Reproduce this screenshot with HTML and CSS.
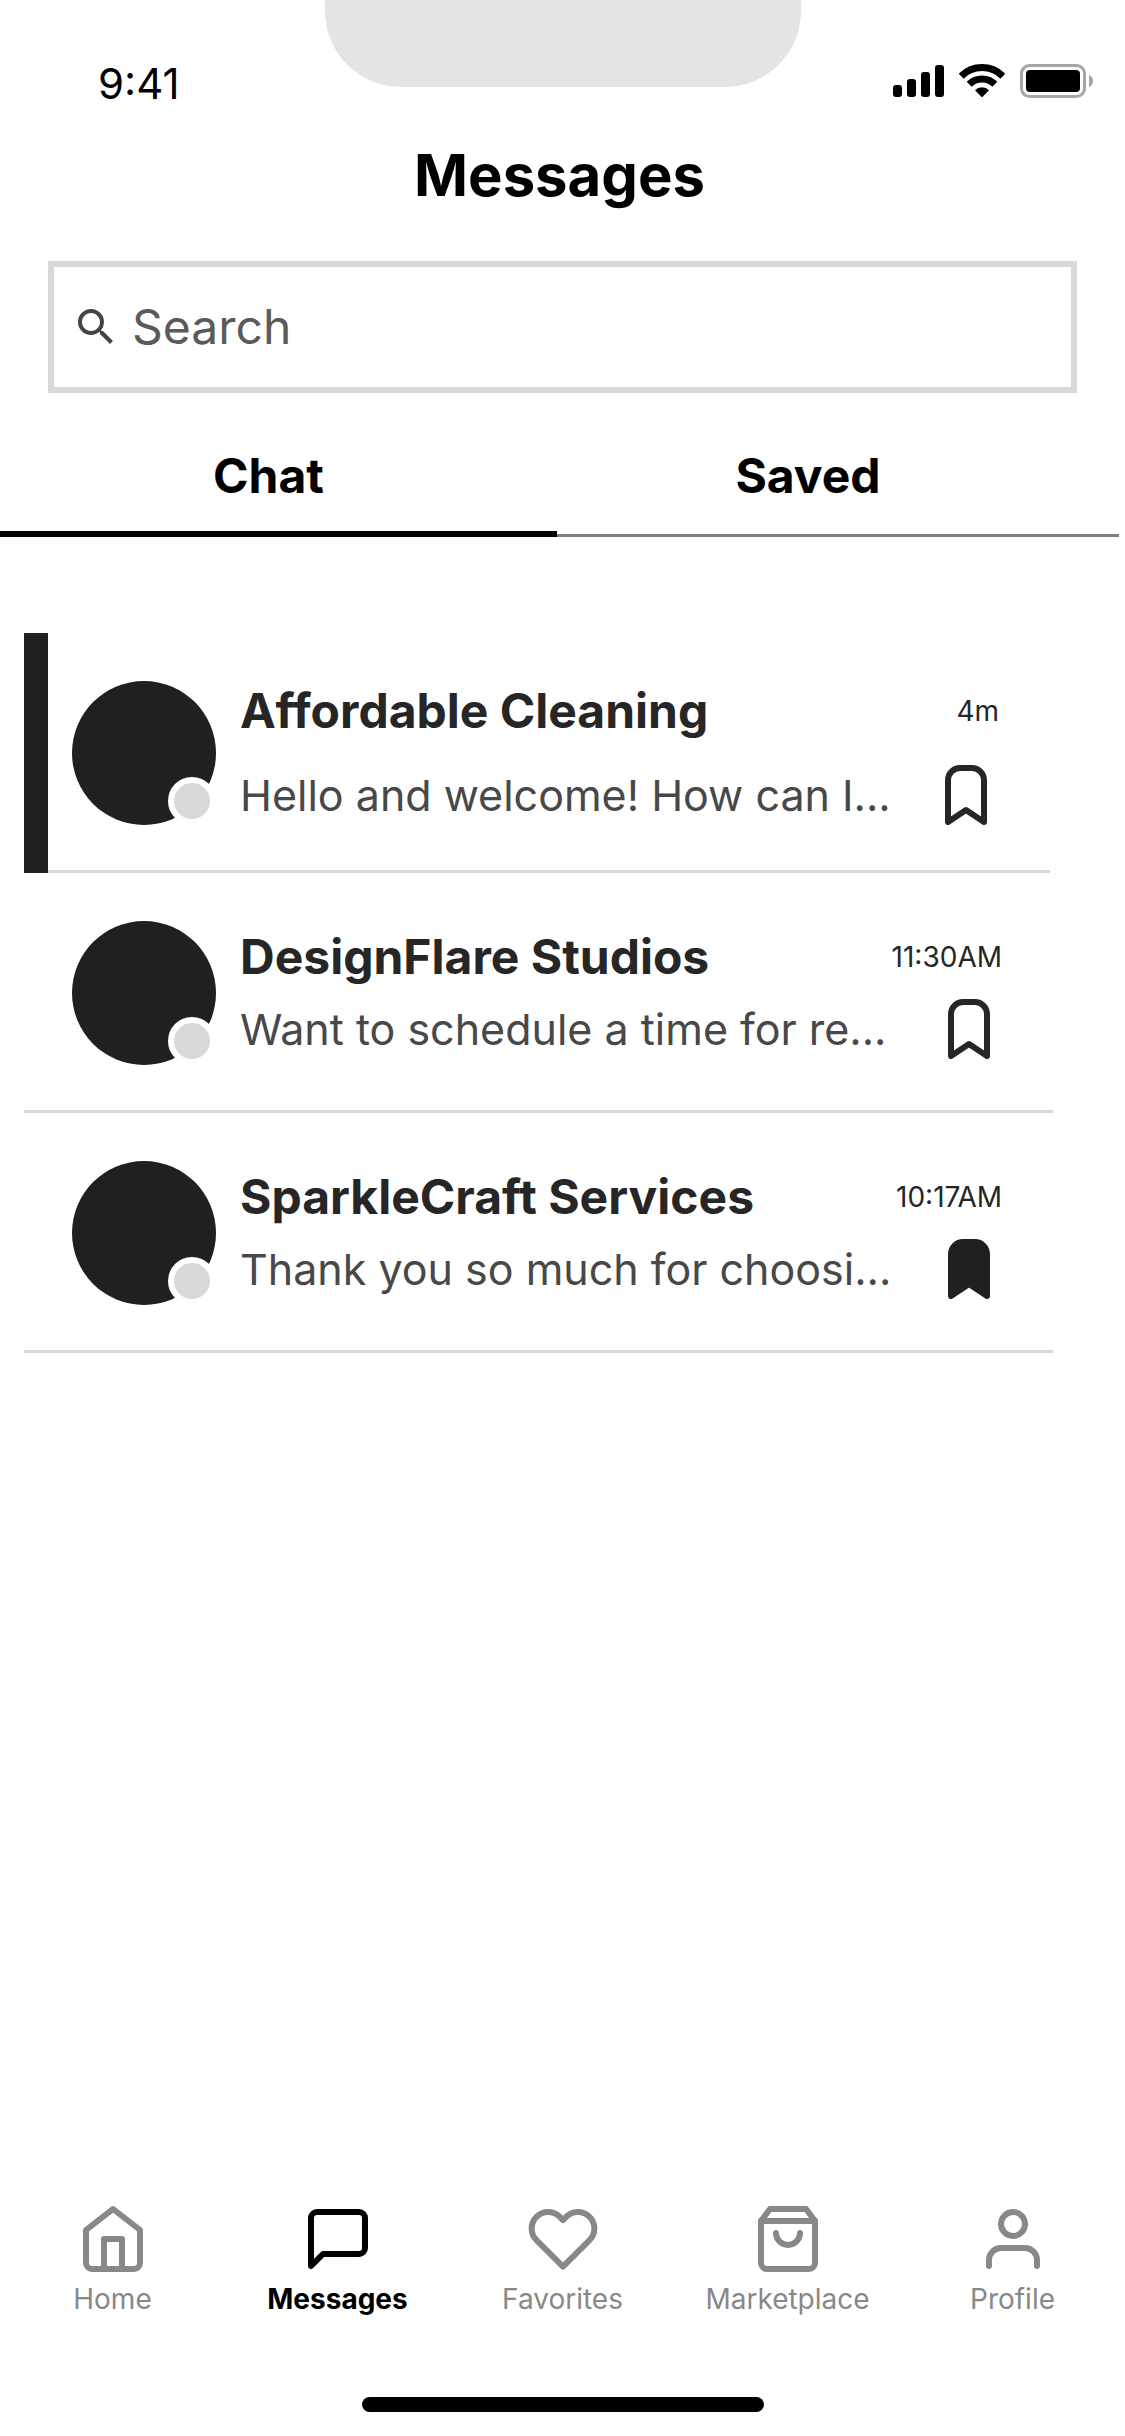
FILE: index.html
```html
<!DOCTYPE html>
<html lang="en">
<head>
<meta charset="utf-8">
<meta name="viewport" content="width=device-width, initial-scale=1">
<title>Messages</title>
<link rel="stylesheet" href="styles.css">
</head>
<body>
<div class="notch"></div>
<div class="status">
  <span class="status-time">9:41</span>
  <div class="status-icons">
    <svg width="51" height="34" viewBox="0 0 51 34" aria-hidden="true">
      <rect x="0" y="21" width="9" height="12" rx="3"/><rect x="14" y="15" width="9" height="18" rx="3"/><rect x="28" y="8" width="9" height="25" rx="3"/><rect x="42" y="1" width="9" height="32" rx="3"/>
    </svg>
    <svg width="46" height="34" viewBox="0 0 46 34" aria-hidden="true">
      <g fill="none" stroke="#000" stroke-width="7"><path d="M2.2 12.200a29.500 29.500 0 0 1 41.600 0"/><path d="M10.200 20.200a18.200 18.200 0 0 1 25.600 0"/></g>
      <path d="M16 26.200a10 10 0 0 1 14 0l-6.300 6.500a1 1 0 0 1-1.400 0z"/>
    </svg>
    <svg width="73" height="34" viewBox="0 0 73 34" aria-hidden="true">
      <rect x="1.500" y="1.500" width="63" height="31" rx="8" fill="none" stroke="#a6a6a6" stroke-width="3"/>
      <rect x="6" y="6" width="54" height="22" rx="4"/>
      <path d="M69 11v12a6.500 6.500 0 0 0 0-12z" fill="#a6a6a6"/>
    </svg>
  </div>
</div>
<header class="header"><h1 class="title">Messages</h1></header>
<main class="main">
  <label class="search">
    <svg class="search-icon" viewBox="0 0 24 24" aria-hidden="true"><path d="M15.500 14h-.79l-.28-.27A6.471 6.471 0 0 0 16 9.500 6.500 6.500 0 1 0 9.500 16c1.610 0 3.090-.59 4.230-1.570l.27.28v.79l5 4.990L20.490 19l-4.990-5zm-6 0C7.010 14 5 11.990 5 9.500S7.010 5 9.500 5 14 7.010 14 9.500 11.990 14 9.500 14z"/></svg>
    <input class="search-input" type="text" placeholder="Search" aria-label="Search">
  </label>
  <div class="tabs" role="tablist">
    <button class="tab tab-chat" type="button" role="tab" aria-selected="true">Chat</button>
    <button class="tab tab-saved" type="button" role="tab" aria-selected="false">Saved</button>
  </div>
  <ul class="chats">
    <li class="chat chat-unread">
      <div class="avatar"><span class="presence"></span></div>
      <div class="chat-body">
        <div class="chat-line"><h2 class="chat-name">Affordable Cleaning</h2><time class="chat-time">4m</time></div>
        <div class="chat-line"><p class="chat-text">Hello and welcome! How can I...</p>
          <button class="save" type="button" aria-label="Save chat"><svg class="save-icon" viewBox="0 0 14 20" aria-hidden="true"><path d="M13 19l-6-4-6 4V5a4 4 0 0 1 4-4h4a4 4 0 0 1 4 4z"/></svg></button></div>
      </div>
    </li>
    <li class="chat">
      <div class="avatar"><span class="presence"></span></div>
      <div class="chat-body">
        <div class="chat-line"><h2 class="chat-name">DesignFlare Studios</h2><time class="chat-time">11:30AM</time></div>
        <div class="chat-line"><p class="chat-text">Want to schedule a time for re...</p>
          <button class="save" type="button" aria-label="Save chat"><svg class="save-icon" viewBox="0 0 14 20" aria-hidden="true"><path d="M13 19l-6-4-6 4V5a4 4 0 0 1 4-4h4a4 4 0 0 1 4 4z"/></svg></button></div>
      </div>
    </li>
    <li class="chat">
      <div class="avatar"><span class="presence"></span></div>
      <div class="chat-body">
        <div class="chat-line"><h2 class="chat-name">SparkleCraft Services</h2><time class="chat-time">10:17AM</time></div>
        <div class="chat-line"><p class="chat-text">Thank you so much for choosi...</p>
          <button class="save save-on" type="button" aria-label="Remove from saved"><svg class="save-icon" viewBox="0 0 14 20" aria-hidden="true"><path d="M13 19l-6-4-6 4V5a4 4 0 0 1 4-4h4a4 4 0 0 1 4 4z"/></svg></button></div>
      </div>
    </li>
  </ul>
</main>
<nav class="nav">
  <a class="nav-item" href="#home"><svg class="nav-icon" viewBox="0 0 24 24" aria-hidden="true"><path d="M3 9l9-7 9 7v11a2 2 0 0 1-2 2H5a2 2 0 0 1-2-2z"/><path d="M9 22V12h6v10"/></svg>Home</a>
  <a class="nav-item nav-current" href="#messages" aria-current="page"><svg class="nav-icon" viewBox="0 0 24 24" aria-hidden="true"><path d="M21 15a2 2 0 0 1-2 2H7l-4 4V5a2 2 0 0 1 2-2h14a2 2 0 0 1 2 2z"/></svg>Messages</a>
  <a class="nav-item" href="#favorites"><svg class="nav-icon" viewBox="0 0 24 24" aria-hidden="true"><path d="M20.840 4.610a5.500 5.500 0 0 0-7.780 0L12 5.670l-1.060-1.060a5.500 5.500 0 0 0-7.780 7.780l1.060 1.060L12 21.230l7.780-7.780 1.060-1.060a5.500 5.500 0 0 0 0-7.780z"/></svg>Favorites</a>
  <a class="nav-item" href="#marketplace"><svg class="nav-icon" viewBox="0 0 24 24" aria-hidden="true"><path d="M6 2L3 6v14a2 2 0 0 0 2 2h14a2 2 0 0 0 2-2V6l-3-4z"/><path d="M3 6h18"/><path d="M16 10a4 4 0 0 1-8 0"/></svg>Marketplace</a>
  <a class="nav-item" href="#profile"><svg class="nav-icon" viewBox="0 0 24 24" aria-hidden="true"><path d="M20 21v-2a4 4 0 0 0-4-4H8a4 4 0 0 0-4 4v2"/><circle cx="12" cy="7" r="4"/></svg>Profile</a>
</nav>
<div class="home-bar"></div>
</body>
</html>
```
FILE: styles.css
```css
* { box-sizing: border-box; }

body {
  margin: 0;
  min-height: 100vh;
  display: flex;
  flex-direction: column;
  background: #fff;
  color: #000;
  font-family: Inter, "Liberation Sans", sans-serif;
}

h1, h2, p, ul { margin: 0; padding: 0; }

button {
  padding: 0;
  border: 0;
  background: none;
  color: inherit;
  font-family: inherit;
}

/* Status bar */
.notch {
  position: absolute;
  top: 0;
  left: 0;
  right: 0;
  width: 476px;
  height: 87px;
  margin: 0 auto;
  border-radius: 0 0 76px 76px;
  background: #e4e4e4;
}

.status {
  display: flex;
  justify-content: space-between;
  padding: 57px 32px 0 98px;
}

.status-time {
  font-size: 42px;
  line-height: 54px;
}

.status-icons {
  display: flex;
  align-items: center;
  gap: 15px;
  height: 48px;
}

/* Header */
.header { padding: 28px 6px 50px 0; }

.title {
  font-size: 58px;
  line-height: 72px;
  font-weight: 700;
  text-align: center;
}

/* Search */
.search {
  display: flex;
  align-items: center;
  gap: 12px;
  height: 132px;
  margin: 0 48px;
  padding: 0 18px;
  border: 6px solid #d9d9d9;
}

.search-icon {
  width: 48px;
  height: 48px;
  fill: #444;
}

.search-input {
  flex: 1;
  min-width: 0;
  padding: 0;
  border: 0;
  outline: 0;
  background: none;
  color: #000;
  font-family: inherit;
  font-size: 48px;
  line-height: 60px;
}

.search-input::placeholder {
  color: #5a5a5a;
  opacity: 1;
}

/* Tabs */
.tabs {
  display: grid;
  grid-template-columns: 557fr 562fr;
  margin: 36px 6px 0 0;
  box-shadow: inset 0 -3px #808080;
}

.tab {
  height: 108px;
  padding-bottom: 8px;
  font-size: 48px;
  line-height: 60px;
  font-weight: 700;
}

.tab-chat {
  padding-right: 20px;
  border-bottom: 6px solid #000;
}

.tab-saved {
  padding-right: 60px;
  border-bottom: 6px solid transparent;
}

/* Conversations */
.chats {
  margin: 96px 72px 0 24px;
  list-style: none;
}

.chat {
  display: flex;
  align-items: center;
  gap: 24px;
  height: 240px;
  padding: 0 51px 0 48px;
  box-shadow: inset 0 -3px #d9d9d9;
  color: #262626;
}

.chat-unread {
  margin-right: 3px;
  box-shadow: inset 24px 0 #202020, inset 0 -3px #d9d9d9;
}

.avatar {
  position: relative;
  flex: none;
  width: 144px;
  height: 144px;
  border-radius: 50%;
  background: #202020;
}

.presence {
  position: absolute;
  right: 0;
  bottom: 0;
  width: 48px;
  height: 48px;
  border: 6px solid #fff;
  border-radius: 50%;
  background: #d9d9d9;
}

.chat-body {
  flex: 1;
  min-width: 0;
  display: grid;
  gap: 12px;
}

.chat-unread .chat-body { gap: 24px; }

.chat-line {
  display: flex;
  align-items: center;
  justify-content: space-between;
  height: 60px;
  white-space: nowrap;
}

.chat-name {
  font-size: 48px;
  line-height: 60px;
  font-weight: 700;
}

.chat-time {
  font-size: 28px;
  line-height: 36px;
}

.chat-text {
  color: #484848;
  font-size: 43px;
  line-height: 60px;
}

.save {
  width: 42px;
  height: 60px;
  margin-right: 12px;
}

.save-icon {
  display: block;
  width: 42px;
  height: 60px;
  fill: none;
  stroke: #262626;
  stroke-width: 2;
  stroke-linejoin: round;
}

.save-on .save-icon {
  fill: #202020;
  stroke: #202020;
}

/* Bottom navigation */
.nav {
  display: grid;
  grid-template-columns: repeat(5, 1fr);
  margin-top: auto;
  padding-bottom: 80px;
}

.nav-item {
  display: flex;
  flex-direction: column;
  align-items: center;
  gap: 6px;
  color: #888;
  font-size: 28px;
  line-height: 36px;
  text-decoration: none;
}

.nav-current {
  color: #000;
  font-weight: 700;
}

.nav-icon {
  width: 72px;
  height: 72px;
  fill: none;
  stroke: currentColor;
  stroke-width: 2;
  stroke-linecap: round;
  stroke-linejoin: round;
}

.home-bar {
  width: 402px;
  height: 15px;
  margin: 0 auto 24px;
  border-radius: 8px;
  background: #000;
}
```
